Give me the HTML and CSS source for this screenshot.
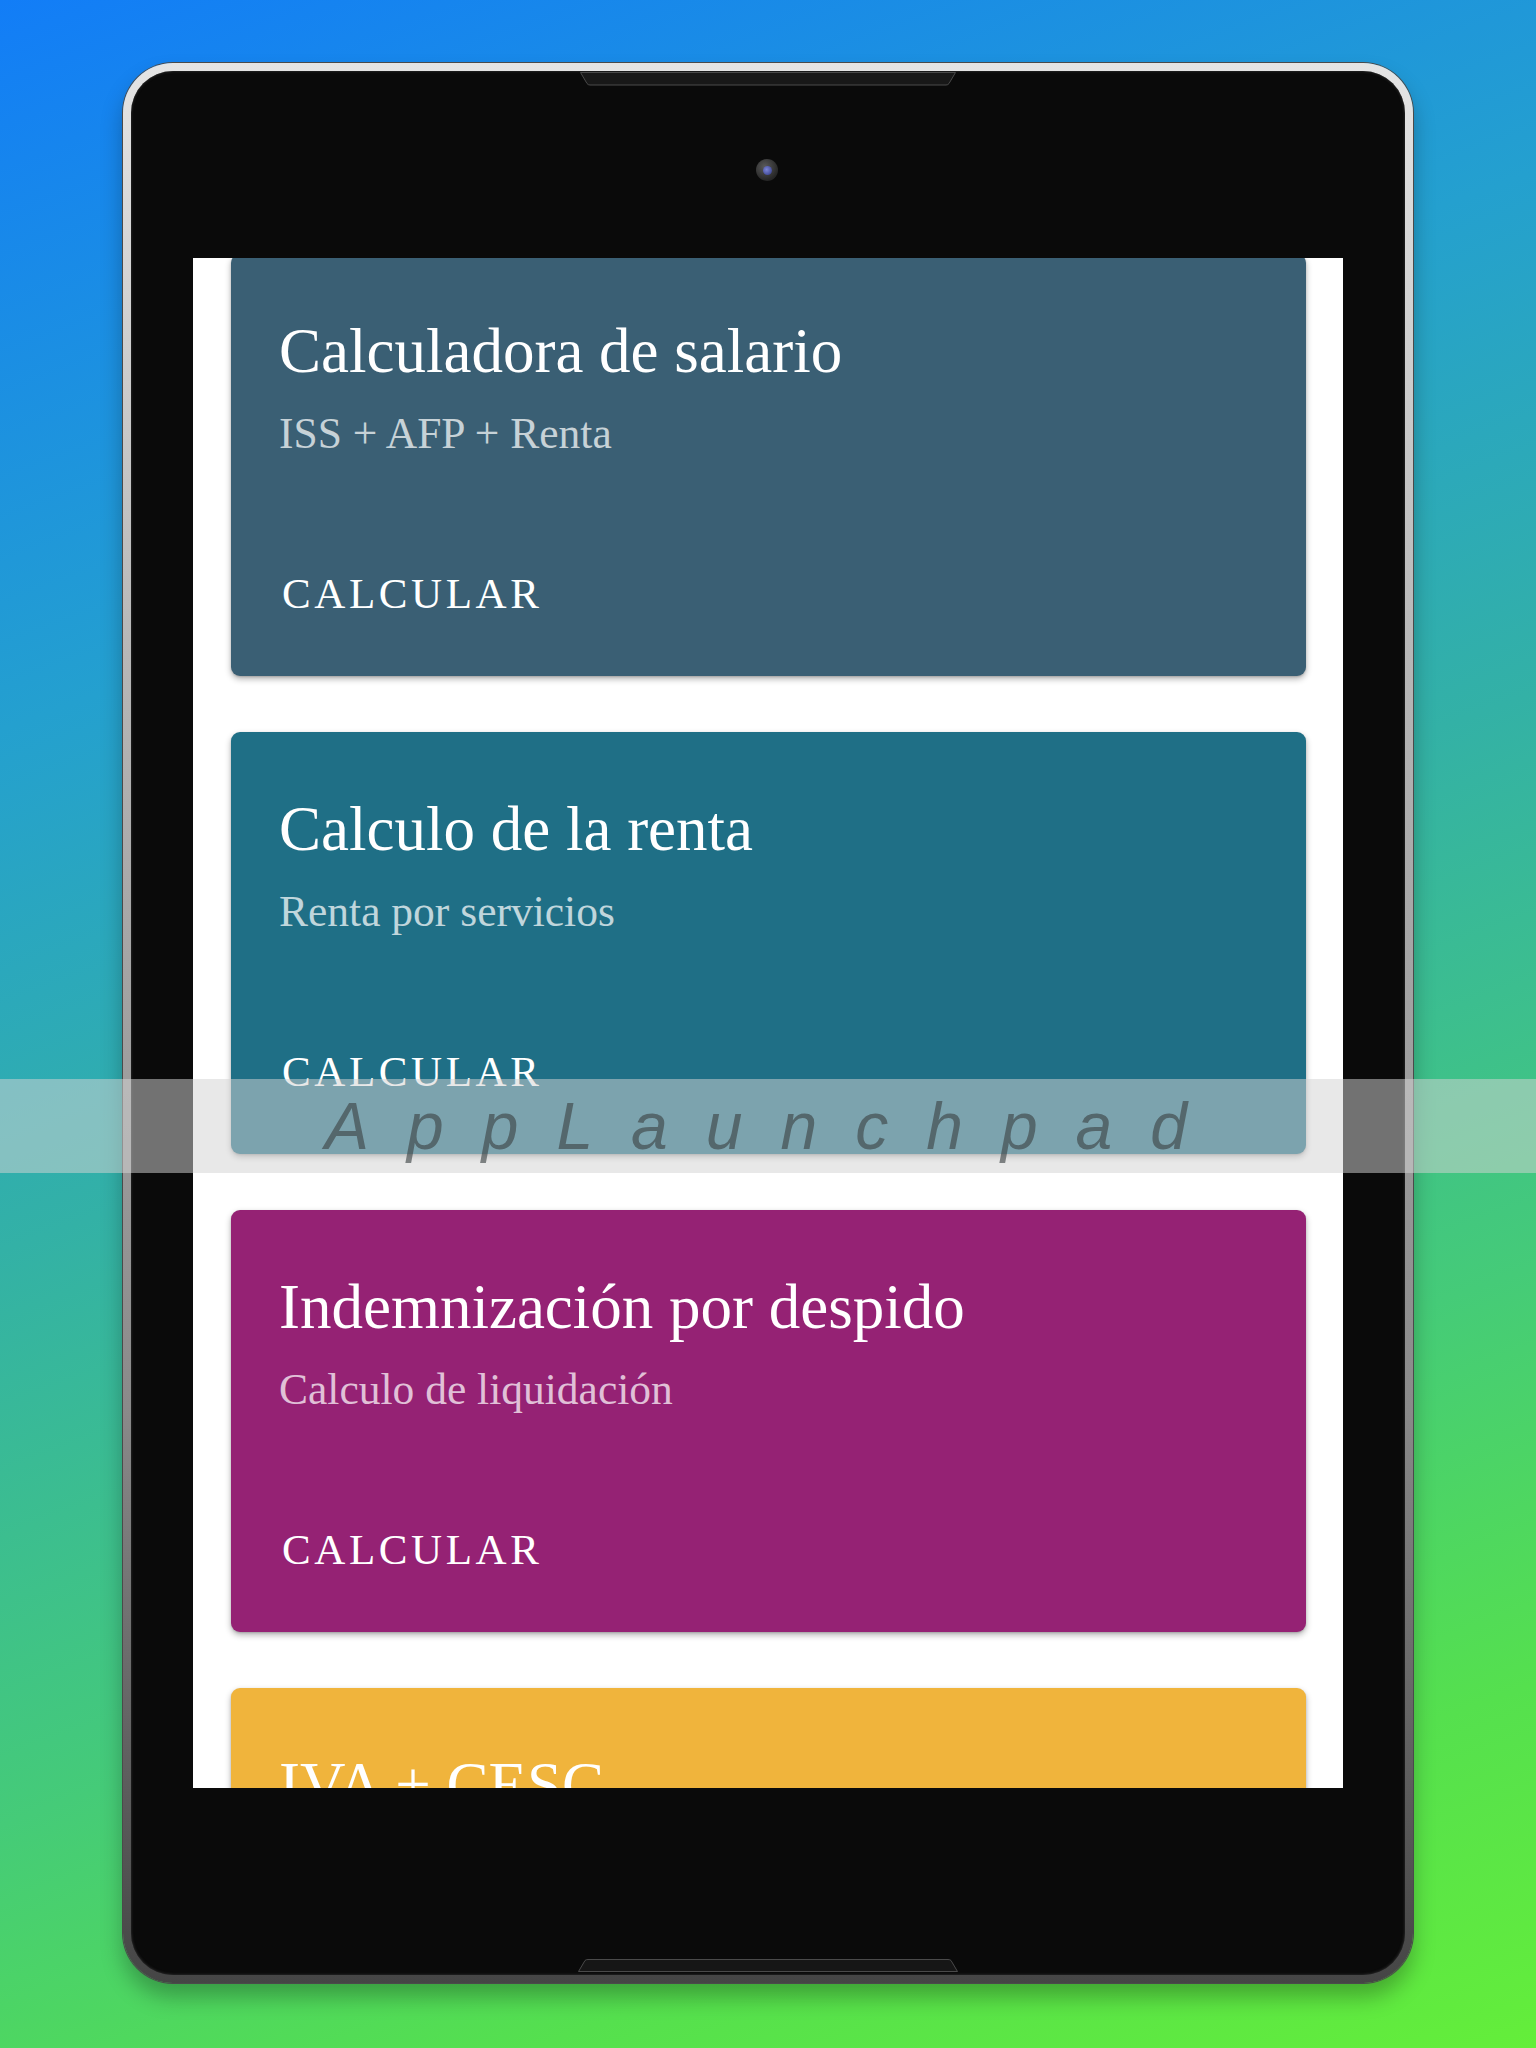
FILE: index.html
```html
<!DOCTYPE html>
<html lang="es">
<head>
    <meta charset="UTF-8">
    <meta name="viewport" content="width=device-width, initial-scale=1.0">
    <title>Calculadoras</title>
    <link rel="stylesheet" href="styles.css">
</head>
<body>
    <div class="tablet">
        <div class="bezel">
            <div class="bezel-top">
                <svg class="notch" width="376" height="14" viewBox="0 0 376 14">
                    <path d="M0.5 0.5 L7 11.5 Q8 13 10 13 L366 13 Q368 13 369 11.5 L375.5 0.5 Z" fill="#181818" stroke="#4a4a4a" stroke-width="1"/>
                </svg>
                <div class="camera"><span></span></div>
            </div>

            <div class="screen">
                <div class="card-list">
                    <div class="card card-salary">
                        <h2>Calculadora de salario</h2>
                        <p>ISS + AFP + Renta</p>
                        <div class="actions"><span class="btn">CALCULAR</span></div>
                    </div>
                    <div class="card card-renta">
                        <h2>Calculo de la renta</h2>
                        <p>Renta por servicios</p>
                        <div class="actions"><span class="btn">CALCULAR</span></div>
                    </div>
                    <div class="card card-despido">
                        <h2>Indemnización por despido</h2>
                        <p>Calculo de liquidación</p>
                        <div class="actions"><span class="btn">CALCULAR</span></div>
                    </div>
                    <div class="card card-iva">
                        <h2>IVA + CESC</h2>
                    </div>
                </div>
            </div>

            <div class="bezel-bottom">
                <svg class="notch" width="380" height="13" viewBox="0 0 380 13">
                    <path d="M0.5 12.5 L7 1.5 Q8 0.5 10 0.5 L370 0.5 Q372 0.5 373 1.5 L379.5 12.5 Z" fill="#161616" stroke="#4a4a4a" stroke-width="1"/>
                </svg>
            </div>
        </div>
    </div>

    <!-- watermark strip across the page -->
    <div class="watermark">AppLaunchpad</div>
</body>
</html>
```

FILE: styles.css
```css
body {
    margin: 0;
    width: 1536px;
    height: 2048px;
    overflow: hidden;
    padding-top: 63px;
    box-sizing: border-box;
    background: linear-gradient(160deg, #127df7 0%, #24a0cf 28%, #33b1a6 48%, #45cb78 70%, #55e04e 86%, #64ee3a 100%);
    font-family: "Liberation Serif", "Times New Roman", serif;
    position: relative;
}

/* device frame */
.tablet {
    width: 1290px;
    height: 1920px;
    margin: 0 auto;
    padding: 8px;
    box-sizing: border-box;
    border-radius: 50px;
    background: linear-gradient(#e4e4e4 0%, #b8b8b8 30%, #8a8a8a 70%, #454545 100%);
    box-shadow: 0 0 0 1px #4a4a4a, 0 14px 22px rgba(0, 0, 0, 0.28);
}

.bezel {
    height: 100%;
    padding: 0 62px;
    box-sizing: border-box;
    border-radius: 42px;
    background: #0a0a0a;
    box-shadow: inset 0 0 3px #3a3a3a;
    display: flex;
    flex-direction: column;
}

.bezel-top {
    height: 187px;
    display: flex;
    flex-direction: column;
    align-items: center;
}

.bezel-top .notch {
    display: block;
    margin-top: 1px;
}

.camera {
    width: 22px;
    height: 22px;
    margin-top: 73px;
    margin-left: -2px;
    border-radius: 50%;
    background: radial-gradient(circle at 40% 35%, #5a5a5a, #262626 70%);
    display: flex;
    align-items: center;
    justify-content: center;
}

.camera span {
    width: 9px;
    height: 9px;
    border-radius: 50%;
    background: radial-gradient(circle at 40% 40%, #7d86d8, #2c3580);
}

.bezel-bottom {
    height: 186px;
    display: flex;
    flex-direction: column;
    justify-content: flex-end;
    align-items: center;
}

.bezel-bottom .notch {
    display: block;
    margin-bottom: 2px;
}

/* screen */
.screen {
    height: 1530px;
    background: #fff;
    overflow: hidden;
}

.card-list {
    margin-top: -4px;
    padding: 0 37px 0 38px;
    display: flex;
    flex-direction: column;
    gap: 56px;
}

.card {
    height: 422px;
    flex-shrink: 0;
    box-sizing: border-box;
    padding: 60px 48px 58px 48px;
    border-radius: 9px;
    box-shadow: 0 3px 6px rgba(0, 0, 0, 0.3), 0 1px 2px rgba(0, 0, 0, 0.15);
    display: flex;
    flex-direction: column;
    color: #fff;
}

.card h2 {
    margin: 0;
    font-size: 63px;
    line-height: 74px;
    font-weight: normal;
}

.card p {
    margin: 17px 0 0;
    font-size: 43.5px;
    line-height: 56px;
    color: rgba(255, 255, 255, 0.72);
}

.actions {
    margin-top: auto;
}

.btn {
    display: block;
    padding-left: 3px;
    font-size: 43px;
    line-height: 48px;
    letter-spacing: 3.6px;
    color: #fff;
}

.card-salary { background: #3a5f74; }
.card-renta { background: #1f6f86; }
.card-despido { background: #952274; }
.card-iva { background: #f0b43c; }

/* watermark */
.watermark {
    position: absolute;
    left: 0;
    top: 1079px;
    width: 100%;
    height: 94px;
    background: rgba(211, 211, 211, 0.52);
    font-family: "Liberation Sans", Arial, sans-serif;
    font-style: italic;
    font-size: 66px;
    line-height: 94px;
    letter-spacing: 38px;
    text-indent: 14px;
    text-align: center;
    color: rgba(60, 66, 68, 0.62);
}
```
